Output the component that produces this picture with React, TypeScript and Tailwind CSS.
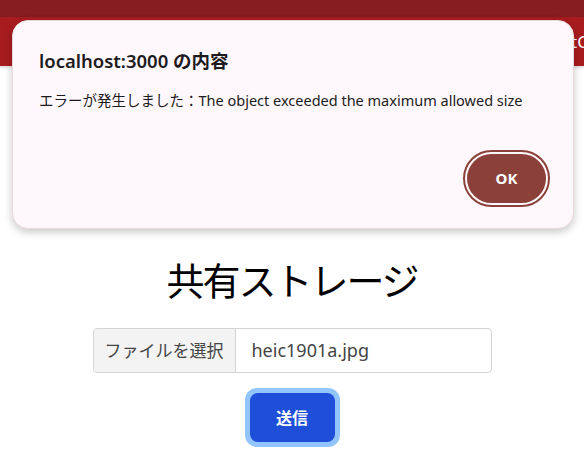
import React from 'react';

const jp = '"Noto Sans", "Noto Sans CJK JP", sans-serif';

export default function App() {
  return (
    <div className="relative min-h-[467px] bg-white overflow-hidden" style={{ fontFamily: jp }}>
      {/* top bar */}
      <div className="h-[17px] bg-[#861d20]" />
      <nav className="h-[50px] bg-[#a81c1f] flex items-center justify-between text-white text-[17px] border-b border-[#e5e5e5] shadow-sm">
        <span className="-ml-[4px]">.</span>
        <span className="-mr-[4px]">tC</span>
      </nav>

      {/* page */}
      <main className="flex flex-col items-center pt-[187px]">
        <h1 className="text-[38px] tracking-[-2px] leading-[52px] text-black">共有ストレージ</h1>
        <div className="mt-[22px] flex w-[399px] h-[45px] border border-[#d3d3d3] rounded-[4px] overflow-hidden text-[17px]">
          <div className="w-[142px] shrink-0 bg-[#f3f3f3] border-r border-[#d3d3d3] flex items-center justify-center text-[#444]">
            ファイルを選択
          </div>
          <div className="flex items-center pl-[16px] text-[18px] text-[#444]">heic1901a.jpg</div>
        </div>
        <div className="mt-[15px] p-[5px] rounded-[12px] bg-[#93c5fd]">
          <button className="w-[85px] h-[49px] rounded-[8px] bg-[#1f4fd8] text-white font-bold text-[16px]">
            送信
          </button>
        </div>
      </main>

      {/* alert dialog */}
      <div className="absolute left-[12px] top-[20px] w-[562px] h-[209px] rounded-[16px] bg-[#fef8fc] border border-[#ecd9dc] shadow-[0_3px_8px_rgba(0,0,0,0.22)] px-[26px] pt-[27px]">
        <h2 className="text-[18.5px] font-semibold text-[#1d1b20] leading-[26px]">localhost:3000 の内容</h2>
        <p className="mt-[16px] text-[14.5px] text-[#1d1b20] leading-[20px]">
          エラーが発生しました：The object exceeded the maximum allowed size
        </p>
        <div className="flex justify-end mt-[40px]">
          <div className="rounded-full border-2 border-[#8b4139] p-[2px] -mr-[3px]">
            <button className="w-[79px] h-[49px] rounded-full bg-[#8b4139] text-white font-bold text-[15px]">
              OK
            </button>
          </div>
        </div>
      </div>
    </div>
  );
}
